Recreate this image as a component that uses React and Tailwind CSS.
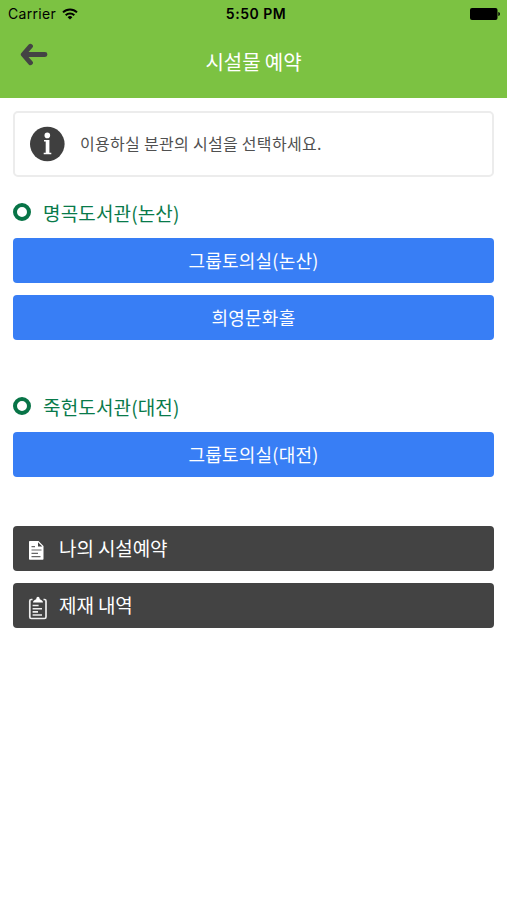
const grupos = [
    { nombre: '명곡도서관(논산)', salas: ['그룹토의실(논산)', '희영문화홀'] },
    { nombre: '죽헌도서관(대전)', salas: ['그룹토의실(대전)'] },
]

function StatusBar (){
    return (
        <div className="grid grid-cols-3 items-center h-[27px] pl-2 pr-[7px] font-['Inter',sans-serif] text-black">
            <div className="flex items-center gap-[6px]">
                <span className="text-[14px] leading-none tracking-[0.3px]">Carrier</span>
                <svg width="16" height="12" viewBox="0 0 16 12" fill="none" stroke="#000" strokeWidth="2">
                    <path d="M1 4.4a10 10 0 0 1 14 0" />
                    <path d="M3.7 7.2a6.1 6.1 0 0 1 8.6 0" />
                    <path d="M8 11.6 5.6 9.2a3.4 3.4 0 0 1 4.8 0z" fill="#000" stroke="none" />
                </svg>
            </div>
            <span className="text-center text-[14px] leading-none font-semibold tracking-[0.5px] pl-1">5:50 PM</span>
            <svg className="justify-self-end" width="30" height="12" viewBox="0 0 30 12">
                <rect x="0" y="0" width="27.5" height="12" rx="2" />
                <path d="M28.3 4c2.2.4 2.2 3.6 0 4z" />
            </svg>
        </div>
    )
}

function Header (){
    return (
        <header className="h-[98px] bg-[#7cc242]">
            <StatusBar />
            <div className="grid grid-cols-[60px_1fr_60px] h-[71px]">
                <button className="self-start pl-5 pt-[16px]" aria-label="뒤로">
                    <svg width="28" height="23" viewBox="0 0 28 23" fill="none" stroke="#444" strokeWidth="4.8" strokeLinecap="round" strokeLinejoin="round">
                        <path d="M10.5 3.2 3.2 11.5 10.5 19.8M4 11.5h21" />
                    </svg>
                </button>
                <h1 className="text-center text-[20px] leading-[28px] pt-[21px] tracking-[-0.1px] text-white">시설물 예약</h1>
            </div>
        </header>
    )
}

function IconoInfo (){
    return (
        <svg width="36" height="36" viewBox="0 0 36 36">
            <circle cx="17.3" cy="18" r="17.3" fill="#3f3f3f" />
            <circle cx="17.3" cy="9.4" r="2.8" fill="#fff" />
            <path d="M14 14.1h5.4v12.7h1.9v1.5h-7.6v-1.5h2V15.6H14z" fill="#fff" />
        </svg>
    )
}

function IconoDocumento (){
    return (
        <svg className="mt-1" width="20" height="24" viewBox="0 0 20 24">
            <path d="M1.8 2h8.7l5 5v13a.8.8 0 0 1-.8.8H1.8A.8.8 0 0 1 1 20V2.800a.8.8 0 0 1 .8-.8z" fill="#fff" />
            <path d="M10 3.200 14.300 7.600H10z" fill="#434343" />
            <path d="M3.500 7.600h3.500M3.500 11h10M3.500 14.300h6.500M3.500 17.600h9" stroke="#666" strokeWidth="1.200" />
        </svg>
    )
}

function IconoPortapapeles (){
    return (
        <svg className="mt-[5px]" width="20" height="24" viewBox="0 0 20 24" fill="none" stroke="#eee">
            <rect x="1.800" y="3.500" width="16.200" height="19" rx="1.500" strokeWidth="1.700" />
            <path d="M4.500 1.500h11v5h-11z" fill="#434343" stroke="none" />
            <path d="M5 6.600c0-2 1.700-2.500 3.200-3.300C8.400 0 11.600 0 11.800 3.300c1.500.8 3.200 1.300 3.200 3.300z" fill="#fff" stroke="none" />
            <path d="M4.600 9.500h6M4.600 12.700h9.400M4.600 15.900h5.400M4.600 19h9.400" strokeWidth="1.600" />
        </svg>
    )
}

function App (){
    return (
        <div className="min-h-screen bg-white font-['Noto_Sans_CJK_KR',sans-serif]">
            <Header />

            <main className="px-[13px] pt-[13px]">
                <div className="flex items-center h-[66px] pl-[15px] border-2 border-[#ececec] rounded-[5px]">
                    <IconoInfo />
                    <p className="ml-[14px] -mt-[2px] text-[16px] tracking-[0.3px] text-[#505050]">이용하실 분관의 시설을 선택하세요.</p>
                </div>

                {grupos.map((grupo) => (
                    <section key={grupo.nombre} className="pt-[22px] mb-[31px]">
                        <h2 className="flex items-center gap-3 h-7 text-[19px] tracking-[0.15px] text-[#087a4a]">
                            <span className="w-[18px] h-[18px] -mt-[2px] rounded-full border-4 border-[#087447]"></span>
                            {grupo.nombre}
                        </h2>
                        <div className="flex flex-col gap-3 mt-[11px]">
                            {grupo.salas.map((sala) => (
                                <button key={sala} className="h-[45px] rounded-[4px] bg-[#387ef5] text-[18px] tracking-[0.2px] text-white">{sala}</button>
                            ))}
                        </div>
                    </section>
                ))}

                <div className="flex flex-col gap-3 mt-[49px]">
                    <button className="flex items-center h-[45px] pl-[15px] rounded-[4px] bg-[#434343] text-[19px] text-white">
                        <IconoDocumento />
                        <span className="ml-[11px] -mt-px tracking-[-0.1px]">나의 시설예약</span>
                    </button>
                    <button className="flex items-center h-[45px] pl-[15px] rounded-[4px] bg-[#434343] text-[19px] text-white">
                        <IconoPortapapeles />
                        <span className="ml-[11px] tracking-[-0.1px]">제재 내역</span>
                    </button>
                </div>
            </main>
        </div>
    )
}

export default App;
